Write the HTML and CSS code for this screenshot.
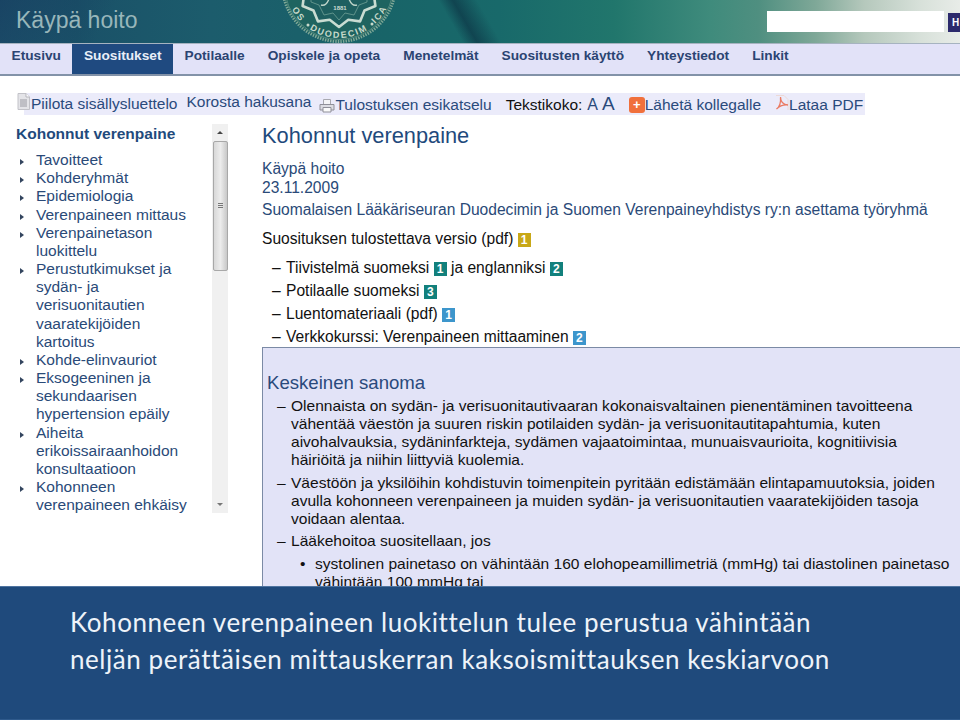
FILE: index.html
```html
<!DOCTYPE html>
<html lang="fi">
<head>
<meta charset="utf-8">
<title>Käypä hoito</title>
<link rel="stylesheet" href="styles.css">
</head>
<body>
<div class="page">
  <header class="banner">
    <div class="brand">Käypä hoito</div>
    <svg class="seal" viewBox="0 0 116 116" width="116" height="116" aria-hidden="true">
      <defs>
        <path id="sealBottom" d="M5 58 A53 53 0 0 0 111 58"/>
      </defs>
      <circle cx="58" cy="58" r="57" fill="#1f6460"/>
      <circle cx="58" cy="58" r="56.500" fill="none" stroke="#7fa898" stroke-width="3" stroke-dasharray="1.400 1.200"/>
      <circle cx="58" cy="58" r="54.500" fill="none" stroke="#5d9186" stroke-width="0.800"/>
      <text class="seal-text"><textPath href="#sealBottom" startOffset="20%" text-anchor="middle">OS</textPath></text>
      <text class="seal-text"><textPath href="#sealBottom" startOffset="50%" text-anchor="middle">DUODECIM</textPath></text>
      <text class="seal-text"><textPath href="#sealBottom" startOffset="80%" text-anchor="middle">ICA</textPath></text>
      <circle cx="27" cy="98" r="1.500" fill="#c8dacb"/>
      <circle cx="91" cy="97" r="1.500" fill="#c8dacb"/>
      <polyline points="100,58 92.800,67.300 94.400,79 83.500,83.500 79,94.400 67.300,92.800 58,100 48.700,92.800 37,94.400 32.500,83.500 21.600,79 23.200,67.300 16,58" fill="#1e5f60" stroke="#c9dcd2" stroke-width="2.600" stroke-linejoin="round"/>
      <polyline points="92,58 86,66 86,75 78,78 73,88 64,86 58,93 52,86 43,88 38,78 30,75 30,66 24,58" fill="none" stroke="#6f9f95" stroke-width="0.800"/>
      <text x="59" y="83" class="seal-year">1881</text>
      <path d="M40 78c3 1 6-1 8-6M76 78c-3 1-6-1-8-6M36 72c3 1 6 0 8-4M80 72c-3 1-6 0-8-4" fill="none" stroke="#bcd2c8" stroke-width="1.400"/>
    </svg>
    <div class="search">
      <input class="search-input" type="text" aria-label="Haku">
      <span class="search-btn">H</span>
    </div>
  </header>

  <nav class="mainnav">
    <a class="tab">Etusivu</a>
    <a class="tab tab-active">Suositukset</a>
    <a class="tab">Potilaalle</a>
    <a class="tab">Opiskele ja opeta</a>
    <a class="tab">Menetelmät</a>
    <a class="tab">Suositusten käyttö</a>
    <a class="tab">Yhteystiedot</a>
    <a class="tab">Linkit</a>
  </nav>

  <div class="toolbar">
    <span class="tool tool-first">
      <svg class="ico ico-page" viewBox="0 0 13 17" width="13" height="17"><path d="M1 .5h8l3.500 3.500v12.500h-11.500z" fill="#e4e4e8" stroke="#c2c2c8"/><path d="M9 .5v3.500h3.500" fill="#fff" stroke="#b5b5bc"/><path d="M3 7h7M3 9h7M3 11h7M3 13h7" stroke="#9a9aa2"/></svg>Piilota sisällysluettelo</span>
    <span class="tool tool-raised">Korosta hakusana</span>
    <span class="tool tool-print tool-low">
      <svg class="ico" viewBox="0 0 16 15" width="16" height="15"><path d="M4.500 1.500h7v5h-7z" fill="#f4f4f6" stroke="#a8a8b0"/><path d="M1 6.500h14v5.500H1z" fill="#dcdce2" stroke="#8f8f98"/><path d="M4 9.500h8v4.500H4z" fill="#fafafa" stroke="#8f8f98"/></svg>Tulostuksen esikatselu</span>
    <span class="tool tool-size tool-low"><span class="size-label">Tekstikoko:</span><span class="size-a">A</span><span class="size-b">A</span></span>
    <span class="tool tool-send tool-low"><span class="plus">+</span>Lähetä kollegalle</span>
    <span class="tool tool-pdf tool-low">
      <svg class="ico ico-pdf" viewBox="0 0 14 16" width="14" height="16"><path d="M1 .5h8l4 4v10.500" fill="none" stroke="#ecd9d6"/><path d="M1.500 14c3-2 4.500-6 4-12 0 5 2.500 7.500 7.500 8-5-.5-8.500 1-11.500 4z" fill="none" stroke="#ea7a62" stroke-width="1.300"/></svg>Lataa PDF</span>
  </div>

  <div class="columns">
    <aside class="side">
      <div class="toc">
        <h2 class="toc-title">Kohonnut verenpaine</h2>
        <ul class="toc-list">
          <li>Tavoitteet</li>
          <li>Kohderyhmät</li>
          <li>Epidemiologia</li>
          <li>Verenpaineen mittaus</li>
          <li>Verenpainetason luokittelu</li>
          <li>Perustutkimukset ja sydän- ja verisuonitautien vaaratekijöiden kartoitus</li>
          <li>Kohde-elinvauriot</li>
          <li>Eksogeeninen ja sekundaarisen hypertension epäily</li>
          <li>Aiheita erikoissairaanhoidon konsultaatioon</li>
          <li>Kohonneen verenpaineen ehkäisy</li>
        </ul>
      </div>
      <div class="scrollbar">
        <span class="arrow-up"></span>
        <span class="thumb"><span class="grip"></span></span>
        <span class="arrow-down"></span>
      </div>
    </aside>

    <main class="content">
      <h1 class="title">Kohonnut verenpaine</h1>
      <p class="meta meta-first">Käypä hoito</p>
      <p class="meta">23.11.2009</p>
      <p class="meta meta-group">Suomalaisen Lääkäriseuran Duodecimin ja Suomen Verenpaineyhdistys ry:n asettama työryhmä</p>
      <p class="print-line">Suosituksen tulostettava versio (pdf) <span class="badge badge-gold">1</span></p>
      <ul class="links">
        <li>Tiivistelmä suomeksi <span class="badge badge-teal">1</span> ja englanniksi <span class="badge badge-teal">2</span></li>
        <li>Potilaalle suomeksi <span class="badge badge-teal">3</span></li>
        <li>Luentomateriaali (pdf) <span class="badge badge-blue">1</span></li>
        <li>Verkkokurssi: Verenpaineen mittaaminen <span class="badge badge-blue">2</span></li>
      </ul>
      <section class="keybox">
        <h2 class="key-title">Keskeinen sanoma</h2>
        <ul class="key-list">
          <li>Olennaista on sydän- ja verisuonitautivaaran kokonaisvaltainen pienentäminen tavoitteena<br>vähentää väestön ja suuren riskin potilaiden sydän- ja verisuonitautitapahtumia, kuten<br>aivohalvauksia, sydäninfarkteja, sydämen vajaatoimintaa, munuaisvaurioita, kognitiivisia<br>häiriöitä ja niihin liittyviä kuolemia.</li>
          <li>Väestöön ja yksilöihin kohdistuvin toimenpitein pyritään edistämään elintapamuutoksia, joiden<br>avulla kohonneen verenpaineen ja muiden sydän- ja verisuonitautien vaaratekijöiden tasoja<br>voidaan alentaa.</li>
          <li>Lääkehoitoa suositellaan, jos
            <ul class="key-sub">
              <li>systolinen painetaso on vähintään 160 elohopeamillimetriä (mmHg) tai diastolinen painetaso<br>vähintään 100 mmHg tai</li>
            </ul>
          </li>
        </ul>
      </section>
    </main>
  </div>

  <div class="caption">
    <p class="caption-text">Kohonneen verenpaineen luokittelun tulee perustua vähintään<br>neljän perättäisen mittauskerran kaksoismittauksen keskiarvoon</p>
  </div>
</div>
</body>
</html>
```
FILE: styles.css
```css
* { box-sizing: border-box; }
html, body { margin: 0; padding: 0; background: #fff; }
body { font-family: "Liberation Sans", Arial, sans-serif; }
ul { list-style: none; margin: 0; padding: 0; }
h1, h2, p { margin: 0; font-weight: normal; }

.page {
  position: relative;
  width: 960px;
  height: 720px;
  overflow: hidden;
  display: flex;
  flex-direction: column;
}

/* banner */
.banner {
  position: relative;
  height: 43px;
  flex: none;
  overflow: hidden;
  display: flex;
  align-items: flex-start;
  justify-content: space-between;
  background:
    linear-gradient(60deg, rgba(10,40,60,0) 48%, rgba(10,40,60,.55) 49.5%, rgba(10,40,60,0) 52%) 0 0 / 940px 100% no-repeat,
    linear-gradient(120deg, rgba(20,50,90,.55) 0%, rgba(20,50,90,0) 12%),
    linear-gradient(90deg, #1f5a70 0%, #1a5168 8%, #1c5c6c 22%, #186468 40%, #18696a 52%, #21766c 64%, #3f8b7c 74%, #4f8f80 79%, #7fa898 85%, #b5c8bc 90%, #d8e1da 96%, #e8ece8 100%);
}
.brand {
  margin: 7px 0 0 16px;
  font-size: 23px;
  line-height: 26px;
  color: #98b6ba;
}
.seal { position: absolute; left: 281px; top: -73px; }
.seal-text { font: bold 9px "Liberation Sans", sans-serif; letter-spacing: 1.7px; fill: #c8dacb; }
.seal-year { font: bold 6px "Liberation Sans", sans-serif; fill: #c9dcd2; text-anchor: middle; }
.search { display: flex; align-items: flex-start; gap: 4px; margin-top: 11px; }
.search-input {
  display: block;
  width: 177px;
  height: 21px;
  border: 0;
  padding: 0;
  background: #fff;
}
.search-btn {
  width: 12px;
  height: 19px;
  margin-top: 2px;
  padding-left: 4px;
  background: #2c2a6c;
  color: #fff;
  font-size: 10px;
  font-weight: bold;
  line-height: 19px;
  overflow: hidden;
}

/* main navigation */
.mainnav {
  flex: none;
  height: 33px;
  display: flex;
  background: #e2e2f8;
  border-top: 1px solid #a6b3c0;
  border-bottom: 2px solid #8292a8;
}
.tab {
  padding: 1px 11.5px 0;
  height: 30px;
  font-size: 13.7px;
  line-height: 21px;
  font-weight: bold;
  color: #2b4472;
}
.tab-active {
  background: #1f4a80;
  color: #e8eef8;
}

/* tools row */
.toolbar {
  flex: none;
  margin: 17px 0 0 24px;
  width: 841px;
  height: 22px;
  background: #ebebfa;
  display: flex;
  align-items: center;
  font-size: 15.5px;
  color: #2a4a7c;
  white-space: nowrap;
}
.tool { display: inline-flex; align-items: center; }
.tool-low { margin-top: 2px; }
.ico { flex: none; }
.ico-page { margin-right: 1px; position: relative; top: -3px; }
.ico-pdf { position: relative; top: -2px; }
.tool-first { margin-left: -7px; }
.tool-raised { margin-left: 9px; position: relative; top: -2px; }
.tool-print { margin-left: 8px; }
.tool-size { margin-left: 14px; gap: 4px; }
.size-label { color: #111; }
.size-a { font-size: 16px; margin-left: 1px; }
.size-b { font-size: 19px; position: relative; top: -1px; }
.tool-send { margin-left: 14px; }
.plus {
  width: 16px;
  height: 16px;
  border-radius: 3px;
  background: #f0703c;
  color: #fff;
  font-weight: bold;
  font-size: 13px;
  line-height: 15px;
  text-align: center;
}
.tool-pdf { margin-left: 14px; }

/* columns */
.columns {
  flex: none;
  display: grid;
  grid-template-columns: 262px 698px;
}
.side {
  display: flex;
  align-items: flex-start;
  padding: 9px 0 0 16px;
}
.toc { width: 196px; }
.toc-title {
  font-size: 15.5px;
  line-height: 20px;
  font-weight: bold;
  color: #1f4a7c;
}
.toc-list { margin-top: 7px; width: 175px; }
.toc-list li {
  position: relative;
  padding-left: 20px;
  font-size: 15.5px;
  line-height: 18.17px;
  color: #2a4a78;
}
.toc-list li::before {
  content: "";
  position: absolute;
  left: 4px;
  top: 8px;
  border-left: 4px solid #33455f;
  border-top: 3px solid transparent;
  border-bottom: 3px solid transparent;
}
.scrollbar {
  width: 16px;
  height: 389px;
  background: #f0f0f0;
  display: flex;
  flex-direction: column;
  align-items: center;
}
.arrow-up, .arrow-down {
  flex: none;
  width: 0;
  border-left: 3px solid transparent;
  border-right: 3px solid transparent;
}
.arrow-up { margin-top: 7px; border-bottom: 3px solid #444; }
.arrow-down { margin-top: auto; margin-bottom: 7px; border-top: 3px solid #777; }
.thumb {
  flex: none;
  width: 15px;
  height: 130px;
  margin-top: 7px;
  background: linear-gradient(90deg, #d8d8d8, #ececec 50%, #c8c8c8);
  border: 1px solid #a8a8a8;
  border-radius: 2px;
  display: flex;
  align-items: center;
  justify-content: center;
}
.grip { width: 5px; height: 6px; background: repeating-linear-gradient(180deg, #777 0 1px, transparent 1px 2px); }

/* content */
.content { padding-top: 9px; }
.title {
  font-size: 21.8px;
  line-height: 24px;
  color: #1f4a7c;
}
.meta { font-size: 15.6px; line-height: 19px; color: #2a4a78; }
.meta-first { margin-top: 11px; }
.meta-group { margin-top: 1.5px; line-height: 22px; }
.print-line { margin-top: 8px; font-size: 15.6px; line-height: 20px; color: #111; }
.badge {
  display: inline-block;
  width: 13px;
  height: 14px;
  vertical-align: 0;
  text-align: center;
  color: #fff;
  font-size: 12px;
  line-height: 14px;
  font-weight: bold;
}
.badge-gold { background: #c8a818; }
.badge-teal { background: #12807c; }
.badge-blue { background: #3d96cc; }
.links { margin-top: 7px; padding-left: 24px; }
.links li {
  position: relative;
  font-size: 15.6px;
  line-height: 23px;
  color: #111;
}
.links li::before {
  content: "–";
  position: absolute;
  left: -14px;
}
.keybox {
  height: 240px;
  margin-top: -1px;
  background: #e2e3f7;
  border-top: 1px solid #7b8aa5;
  border-left: 1px solid #7b8aa5;
  padding: 24px 0 0 4px;
}
.key-title { font-size: 18.6px; line-height: 21px; color: #2a4a7c; }
.key-list { margin-top: 4px; padding-left: 24px; }
.key-list > li {
  position: relative;
  font-size: 15.55px;
  line-height: 18px;
  color: #111;
  margin-bottom: 5px;
}
.key-list > li:nth-child(2) { margin-bottom: 4px; }
.key-list > li::before {
  content: "–";
  position: absolute;
  left: -14px;
}
.key-sub { margin-top: 5px; padding-left: 24px; }
.key-sub li { position: relative; }
.key-sub li::before {
  content: "•";
  position: absolute;
  left: -15px;
}

/* caption */
.caption {
  position: absolute;
  left: 0;
  right: 0;
  top: 586px;
  bottom: 0;
  background: #1f4a7c;
  border-top: 1px solid #4f74a0;
  border-bottom: 1px solid #2f5a8c;
  padding: 17px 0 0 70px;
}
.caption-text {
  font-family: Lato, "Open Sans", sans-serif;
  font-size: 26px;
  line-height: 37px;
  letter-spacing: 0.56px;
  color: #eef3f9;
  white-space: nowrap;
}
```
